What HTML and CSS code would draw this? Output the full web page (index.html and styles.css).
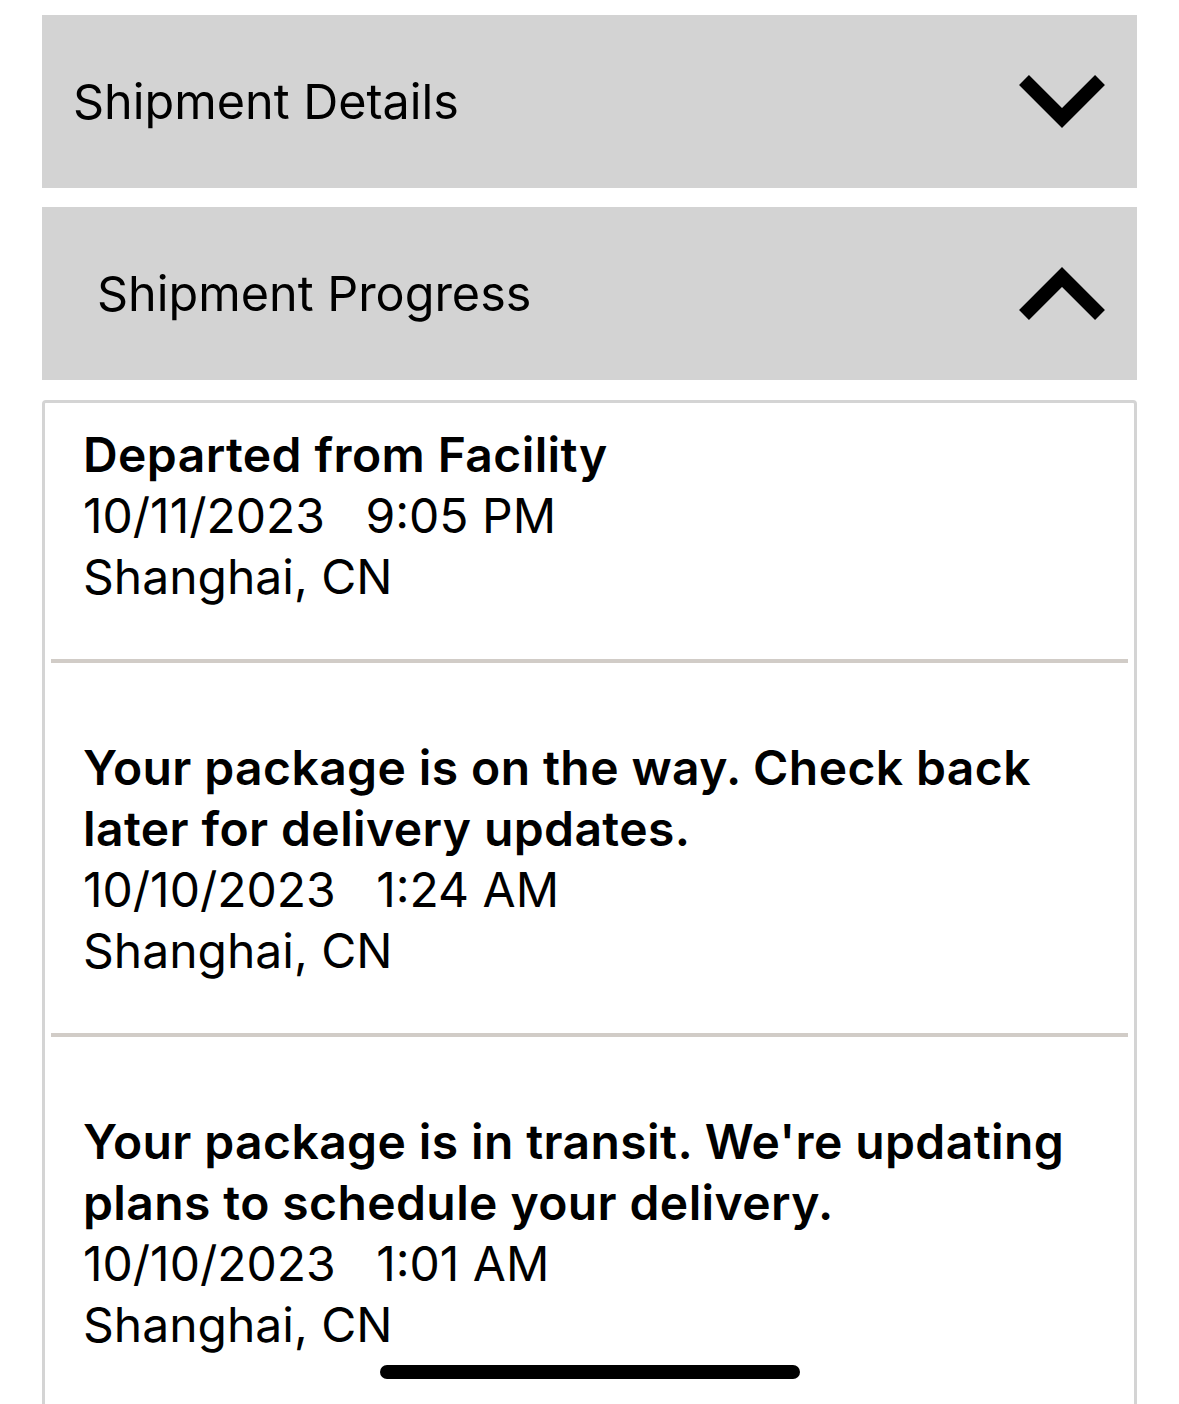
FILE: index.html
```html
<!DOCTYPE html>
<html lang="en">
<head>
  <meta charset="UTF-8" />
  <meta name="viewport" content="width=device-width, initial-scale=1.0"/>
  <title>Shipment Tracking</title>
  <link rel="stylesheet" href="styles.css">
</head>
<body>
  <main class="page">
    <section class="panel">
      <div class="panel-head">
        <span class="panel-title">Shipment Details</span>
        <svg class="chevron" width="86" height="53" viewBox="0 0 86 53">
          <polyline points="5,5 43,43 81,5" />
        </svg>
      </div>
    </section>

    <section class="panel open">
      <div class="panel-head">
        <span class="panel-title">Shipment Progress</span>
        <svg class="chevron" width="86" height="53" viewBox="0 0 86 53">
          <polyline points="5,48 43,10 81,48" />
        </svg>
      </div>
    </section>

    <div class="events">
      <div class="event first">
        <div class="event-title">Departed from Facility</div>
        <div class="event-time">10/11/2023&nbsp;&nbsp;&nbsp;9:05 PM</div>
        <div class="event-place">Shanghai, CN</div>
      </div>
      <div class="event">
        <div class="event-title">Your package is on the way. Check back later for delivery updates.</div>
        <div class="event-time">10/10/2023&nbsp;&nbsp;&nbsp;1:24 AM</div>
        <div class="event-place">Shanghai, CN</div>
      </div>
      <div class="event">
        <div class="event-title">Your package is in transit. We're updating plans to schedule your delivery.</div>
        <div class="event-time">10/10/2023&nbsp;&nbsp;&nbsp;1:01 AM</div>
        <div class="event-place">Shanghai, CN</div>
      </div>
    </div>
  </main>
  <div class="home-bar"></div>
</body>
</html>
```

FILE: styles.css
```css
:root {
  --panel: #d3d3d3;
  --border: #d4d4d4;
  --divider: #d1ccc7;
  --text: #000;
}
html, body {
  height: 100%;
}
body {
  margin: 0;
  background: #fff;
  color: var(--text);
  font-family: Inter, "Liberation Sans", sans-serif;
  overflow: hidden;
}
.page {
  padding: 15px 42px 0;
  display: flex;
  flex-direction: column;
  gap: 19px;
}
.panel-head {
  height: 173px;
  background: var(--panel);
  display: flex;
  align-items: center;
  justify-content: space-between;
  padding: 0 32px 0 31px;
}
.panel.open .panel-head {
  padding-left: 55px;
}
.panel-title {
  font-size: 48.5px;
  font-weight: 400;
}
.chevron polyline {
  fill: none;
  stroke: #000;
  stroke-width: 14;
  stroke-linejoin: miter;
  stroke-linecap: butt;
}
.events {
  margin-top: 1px;
  border: 3px solid var(--border);
  border-bottom: none;
  border-radius: 4px 4px 0 0;
  padding: 0 6px;
  height: 1100px;
}
.event {
  padding: 74px 32px 52px;
  border-top: 4px solid var(--divider);
  font-size: 48px;
  line-height: 61px;
}
.event.first {
  border-top: none;
  padding-top: 21px;
}
.event-title {
  font-weight: 600;
  letter-spacing: 0.4px;
}
.home-bar {
  position: fixed;
  left: 380px;
  top: 1365px;
  width: 420px;
  height: 14px;
  border-radius: 7px;
  background: #000;
}
```
